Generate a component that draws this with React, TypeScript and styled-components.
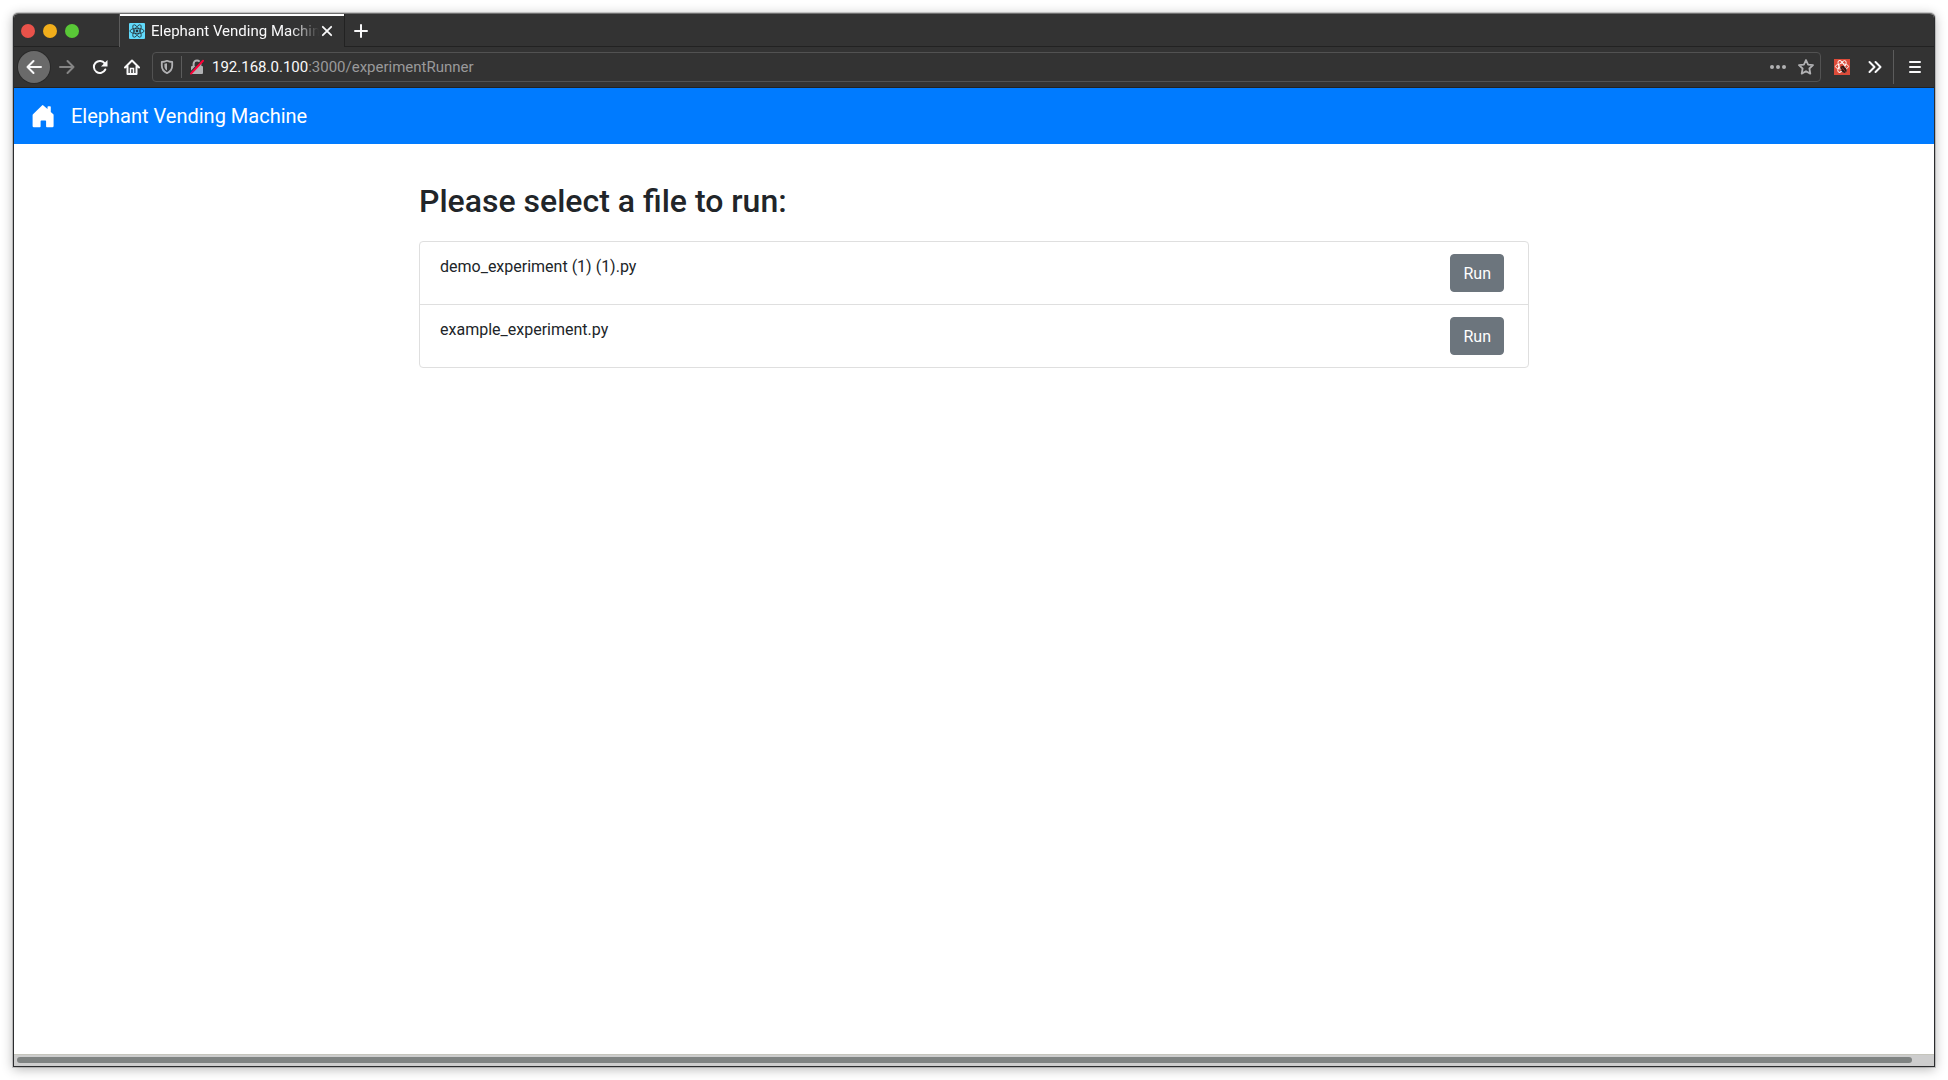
import React from "react";
import styled, { createGlobalStyle } from "styled-components";

const GlobalStyle = createGlobalStyle`
  *, *::before, *::after { box-sizing: border-box; }
  body {
    margin: 0;
    background: #fff;
    color: #212529;
    font: 400 16px/24px Roboto, "Liberation Sans", sans-serif;
  }
  button, input { font: inherit; }
`;

const Desktop = styled.div`
  min-height: 100vh;
  padding: 13px;
  display: flex;
`;

const Window = styled.div`
  flex: 1;
  min-width: 0;
  display: flex;
  flex-direction: column;
  border: 1px solid #2b2c2e;
  border-top-color: #6f6f6f;
  border-radius: 5px 5px 0 0;
  background: #fff;
  box-shadow: 0 0 0 1px rgba(0, 0, 0, 0.16), 0 2px 12px rgba(0, 0, 0, 0.3);
`;

const Chrome = styled.div`
  background: #333;
  border-radius: 4px 4px 0 0;
  color: #f9f9fa;
  font-size: 15px;
  line-height: 20px;
`;

const TabBar = styled.div`
  display: flex;
  height: 33px;
`;

const WindowControls = styled.div`
  display: flex;
  align-items: center;
  gap: 8px;
  width: 105px;
  padding: 2px 0 0 7px;
  border-bottom: 1px solid #222;
`;

const Light = styled.button<{ $color: string }>`
  width: 14px;
  height: 14px;
  padding: 0;
  border: 0;
  border-radius: 50%;
  background: ${(p) => p.$color};
`;

const Tab = styled.div`
  display: flex;
  align-items: center;
  width: 226px;
  padding: 1px 9px 0;
  border-left: 1px solid #5c5c5c;
  border-right: 1px solid #222;
  background: linear-gradient(#fff 2px, transparent 2px);
`;

const TabLabel = styled.button`
  flex: 1;
  min-width: 0;
  display: flex;
  align-items: center;
  gap: 6px;
  padding: 0;
  border: 0;
  background: none;
  color: inherit;
`;

const TabTitle = styled.span`
  flex: 1;
  overflow: hidden;
  text-align: left;
  white-space: nowrap;
  mask-image: linear-gradient(to left, transparent, #000 28px);
`;

const BareButton = styled.button<{ $width: number; $color?: string }>`
  display: flex;
  align-items: center;
  justify-content: center;
  flex: none;
  width: ${(p) => p.$width}px;
  height: 32px;
  padding: 0;
  border: 0;
  background: none;
  color: ${(p) => p.$color ?? "#f9f9fa"};
`;

const TabStripEnd = styled.div`
  flex: 1;
  padding: 1px 0 0;
  border-bottom: 1px solid #222;
`;

const Toolbar = styled.div`
  display: flex;
  align-items: center;
  height: 41px;
  padding: 0 2px 0 4px;
  border-bottom: 1px solid #222;
`;

const BackButton = styled(BareButton)`
  border-radius: 50%;
  background: #6a6a6a;
  box-shadow: 0 0 0 1px #2a2a2a;
`;

const AddressBar = styled.div`
  flex: 1;
  display: flex;
  align-items: center;
  height: 30px;
  margin: 0 5px 0 4px;
  border: 1px solid #525252;
  border-radius: 4px;
`;

const Divider = styled.span<{ $height: number }>`
  flex: none;
  width: 1px;
  height: ${(p) => p.$height}px;
  background: #5c5c5c;
`;

const MenuDivider = styled(Divider)`
  margin: 0 4px 0 1px;
`;

const Host = styled.label`
  color: #f9f9fa;
`;

const PathInput = styled.input`
  flex: 1;
  min-width: 0;
  padding: 0;
  border: 0;
  outline: 0;
  background: none;
  color: #9a9a9b;
`;

const Page = styled.div`
  flex: 1;
`;

const Navbar = styled.nav`
  display: flex;
  align-items: center;
  height: 56px;
  padding: 0 18px;
  background: #007bff;
`;

const BrandLink = styled.a`
  display: flex;
  align-items: center;
  gap: 17px;
  color: #fff;
  font-size: 20px;
  line-height: 30px;
  text-decoration: none;
`;

const Container = styled.main`
  max-width: 1140px;
  margin: 0 auto;
  padding: 38px 15px;
`;

const Heading = styled.h2`
  margin: 0 0 21px;
  font-size: 32px;
  font-weight: 500;
  line-height: 38px;
`;

const FileList = styled.ul`
  margin: 0;
  padding: 0;
  border: 1px solid #dfdfdf;
  border-radius: 4px;
  list-style: none;
`;

const FileRow = styled.li`
  display: flex;
  align-items: flex-start;
  justify-content: space-between;
  padding: 12px 24px 12px 20px;
  line-height: 26px;

  & + & {
    border-top: 1px solid #dfdfdf;
  }
`;

const RunButton = styled.button`
  padding: 6px 12px 4px;
  border: 1px solid #6c757d;
  border-radius: 4px;
  background: #6c757d;
  color: #fff;
`;

const ScrollTrack = styled.div`
  height: 12px;
  padding: 2px 22px 3px 3px;
  border-top: 1px solid #c5c5bc;
  background: #cdcdcd;
`;

const ScrollThumb = styled.div`
  height: 6px;
  border-radius: 3px;
  background: #7f8382;
`;

type IconProps = { size?: number; children: React.ReactNode };

const Icon = ({ size = 16, children }: IconProps) => (
  <svg
    width={size}
    height={size}
    viewBox="0 0 16 16"
    fill="none"
    stroke="currentColor"
    strokeWidth="2"
    strokeLinecap="round"
    strokeLinejoin="round"
    aria-hidden="true"
  >
    {children}
  </svg>
);

const ReactFavicon = () => (
  <svg width="16" height="16" viewBox="0 0 16 16" aria-hidden="true">
    <rect width="16" height="16" rx="1" fill="#61dafb" />
    <g fill="none" stroke="#23323a" strokeWidth="0.8">
      <ellipse cx="8" cy="8" rx="7" ry="2.7" />
      <ellipse cx="8" cy="8" rx="7" ry="2.7" transform="rotate(60 8 8)" />
      <ellipse cx="8" cy="8" rx="7" ry="2.7" transform="rotate(120 8 8)" />
    </g>
    <circle cx="8" cy="8" r="1.4" fill="#23323a" />
  </svg>
);

const DevtoolsIcon = () => (
  <svg width="16" height="16" viewBox="0 0 16 16" aria-hidden="true">
    <rect width="16" height="16" fill="#dd4b39" />
    <g fill="none" stroke="#fff" strokeWidth="0.9">
      <ellipse cx="8" cy="7.5" rx="6.6" ry="2.6" />
      <ellipse cx="8" cy="7.5" rx="6.6" ry="2.6" transform="rotate(60 8 7.5)" />
      <ellipse cx="8" cy="7.5" rx="6.6" ry="2.6" transform="rotate(120 8 7.5)" />
    </g>
    <circle cx="7.5" cy="6.8" r="2" fill="#dd4b39" />
    <ellipse cx="9.6" cy="10.4" rx="2.6" ry="3.8" fill="#2a1513" transform="rotate(-35 9.6 10.4)" />
    <path d="M8 8.400l3.400 4.400M6.800 10.800l1.600-.8M10.600 8.600l1.200-1.400" stroke="#dd4b39" strokeWidth="0.6" />
  </svg>
);

const ShieldIcon = () => (
  <svg width="14" height="16" viewBox="0 0 14 16" aria-hidden="true">
    <path
      d="M7 1.800C8.600 2.600 10.200 3 12.200 3v3.800c0 3.400-1.800 5.800-5.200 7.400-3.400-1.600-5.200-4-5.200-7.400V3C3.800 3 5.400 2.600 7 1.800z"
      fill="none"
      stroke="#b1b1b3"
      strokeWidth="1.8"
      strokeLinejoin="round"
    />
    <path d="M7 4.200v7.400C5.200 10.400 4.400 9 4.400 7V4.800z" fill="#b1b1b3" />
  </svg>
);

const InsecureIcon = () => (
  <svg width="16" height="16" viewBox="0 0 16 16" aria-hidden="true">
    <path d="M4.600 8V4.800a3.400 3.400 0 0 1 6.800 0V8" fill="none" stroke="#b1b1b3" strokeWidth="2" />
    <rect x="2" y="7" width="12" height="8" rx="1" fill="#b1b1b3" />
    <path d="M1 13.800 13 1.200" stroke="#333" strokeWidth="1.600" />
    <path d="M2 14.600 14 1.800" stroke="#ff0039" strokeWidth="2" strokeLinecap="round" />
  </svg>
);

const HouseIcon = () => (
  <svg width="22" height="24" viewBox="0 0 22 24" fill="#fff" aria-hidden="true">
    <path d="M10 1.400a1 1 0 0 1 1.400 0L15.500 5V3a.7.7 0 0 1 .7-.7h1.900a.7.7 0 0 1 .7.7v5l2.500 2.300q.3.300.3.800V22q0 1.200-1.200 1.200h-5.500q-.8 0-.8-.8v-5.200q0-.8-.8-.8H9.400q-.8 0-.8.8v5.200q0 .8-.8.8H1.900Q.6 23.200.6 22V11.100q0-.5.4-.9z" />
  </svg>
);

const files = ["demo_experiment (1) (1).py", "example_experiment.py"];

export default function App() {
  return (
    <>
      <GlobalStyle />
      <Desktop>
        <Window>
          <Chrome>
            <TabBar>
              <WindowControls>
                <Light $color="#e9524a" aria-label="Close window" />
                <Light $color="#f1ae1b" aria-label="Minimize window" />
                <Light $color="#59c837" aria-label="Maximize window" />
              </WindowControls>
              <Tab>
                <TabLabel>
                  <ReactFavicon />
                  <TabTitle>Elephant Vending Machine</TabTitle>
                </TabLabel>
                <BareButton $width={16} aria-label="Close tab">
                  <Icon>
                    <path d="M3.800 3.800l8.400 8.400M12.200 3.800l-8.400 8.400" strokeWidth="1.8" />
                  </Icon>
                </BareButton>
              </Tab>
              <TabStripEnd>
                <BareButton $width={32} aria-label="New tab">
                  <Icon>
                    <path d="M8 2v12M2 8h12" />
                  </Icon>
                </BareButton>
              </TabStripEnd>
            </TabBar>
            <Toolbar>
              <BackButton $width={32} aria-label="Back">
                <Icon>
                  <path d="M15 8H1.500M7.500 2l-6 6 6 6" />
                </Icon>
              </BackButton>
              <BareButton $width={34} $color="#858585" aria-label="Forward">
                <Icon>
                  <path d="M1 8h13.500M8.500 2l6 6-6 6" />
                </Icon>
              </BareButton>
              <BareButton $width={31} aria-label="Reload">
                <Icon>
                  <path d="M13.300 10.500a6 6 0 1 1-.6-6.200" />
                  <path d="M15.500 1v6.500H9z" fill="currentColor" stroke="none" />
                </Icon>
              </BareButton>
              <BareButton $width={33} aria-label="Home">
                <Icon>
                  <path d="M1 8.500 8 1.500l7 7M3.500 7.500V15h9V7.500" />
                  <path d="M6.500 14V9.500h3V14" strokeWidth="1.5" strokeLinejoin="miter" />
                </Icon>
              </BareButton>
              <AddressBar>
                <BareButton $width={28} aria-label="Tracking protection">
                  <ShieldIcon />
                </BareButton>
                <Divider $height={22} />
                <BareButton $width={30} aria-label="Connection is not secure">
                  <InsecureIcon />
                </BareButton>
                <Host htmlFor="address">192.168.0.100</Host>
                <PathInput id="address" defaultValue=":3000/experimentRunner" />
                <BareButton $width={28} $color="#b1b1b3" aria-label="Page actions">
                  <Icon>
                    <g fill="currentColor" stroke="none">
                      <circle cx="2" cy="8" r="2" />
                      <circle cx="8" cy="8" r="2" />
                      <circle cx="14" cy="8" r="2" />
                    </g>
                  </Icon>
                </BareButton>
                <BareButton $width={28} $color="#b1b1b3" aria-label="Bookmark this page">
                  <Icon>
                    <path
                      d="M8 1l2.100 4.600 4.900.6-3.600 3.300.9 5.100L8 12.200l-4.300 2.400.9-5.100L1 6.200l4.900-.6z"
                      strokeWidth="1.8"
                    />
                  </Icon>
                </BareButton>
              </AddressBar>
              <BareButton $width={32} aria-label="Developer tools">
                <DevtoolsIcon />
              </BareButton>
              <BareButton $width={34} aria-label="More tools">
                <Icon>
                  <path d="M2.500 3l5 5-5 5M8.500 3l5 5-5 5" />
                </Icon>
              </BareButton>
              <MenuDivider $height={34} />
              <BareButton $width={34} aria-label="Open menu">
                <Icon>
                  <path d="M3 3h10M3 8h10M3 13h10" />
                </Icon>
              </BareButton>
            </Toolbar>
          </Chrome>
          <Page>
            <Navbar>
              <BrandLink href="#home">
                <HouseIcon />
                <span>Elephant Vending Machine</span>
              </BrandLink>
            </Navbar>
            <Container>
              <Heading>Please select a file to run:</Heading>
              <FileList>
                {files.map((name) => (
                  <FileRow key={name}>
                    <span>{name}</span>
                    <RunButton>Run</RunButton>
                  </FileRow>
                ))}
              </FileList>
            </Container>
          </Page>
          <ScrollTrack>
            <ScrollThumb />
          </ScrollTrack>
        </Window>
      </Desktop>
    </>
  );
}
